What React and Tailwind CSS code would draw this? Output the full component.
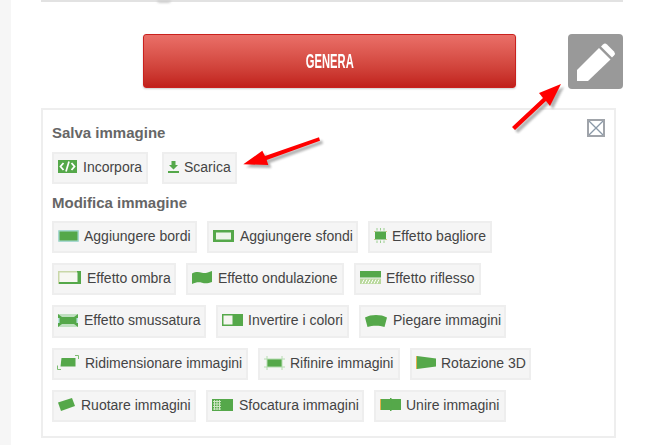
const G = "#55a84a";

const icons = {
  embed: (
    <svg width="19" height="13" viewBox="0 0 19 13">
      <rect width="19" height="13" fill={G} />
      <path d="M5.500 3 2.500 6.500l3 3.500M13.500 3l3 3.500-3 3.500" fill="none" stroke="#fff" strokeWidth="1.800" />
      <path d="M11 1.500 8 11.500" stroke="#fff" strokeWidth="1.700" />
    </svg>
  ),
  download: (
    <svg width="11" height="12" viewBox="0 0 11 12">
      <path d="M3.500 0h4v4H10L5.500 8.500 1 4h2.500z" fill={G} />
      <rect y="10" width="11" height="2" fill={G} />
    </svg>
  ),
  border: (
    <svg width="21" height="12" viewBox="0 0 21 12">
      <rect width="21" height="12" rx="1" fill="#a8d8d0" />
      <rect x="1.500" y="1.500" width="18" height="9" fill={G} />
    </svg>
  ),
  bg: (
    <svg width="21" height="12" viewBox="0 0 21 12">
      <rect width="21" height="12" fill={G} />
      <rect x="3" y="2.500" width="15" height="7" fill="#eef5ea" />
    </svg>
  ),
  glow: (
    <svg width="13" height="15" viewBox="0 0 13 15">
      <rect x="1" y="3.500" width="11" height="8" fill={G} />
      <path d="M3 0v2.500M6.500 0v2.500M10 0v2.500M3 12.500V15M6.500 12.500V15M10 12.500V15" stroke="#9bcf90" strokeWidth="1" />
      <path d="M0 3.500h1M12 3.500h1M0 11.500h1M12 11.500h1" stroke="#e3c77a" strokeWidth="1" />
    </svg>
  ),
  shadow: (
    <svg width="23" height="13" viewBox="0 0 23 13">
      <rect width="22" height="13" fill="#c9d7a8" />
      <rect x="19" width="4" height="13" fill={G} />
      <rect x="1" y="11" width="20" height="2" fill={G} />
      <rect x="1.500" y="1.500" width="18" height="9.500" fill="#f7f7f2" />
    </svg>
  ),
  wave: (
    <svg width="20" height="13" viewBox="0 0 20 13">
      <path d="M0 2.500C4 .5 7 1 10 1.800S16 1.500 20 0v11c-4 1.500-7 1.500-10 .7S4 11 0 13z" fill={G} />
    </svg>
  ),
  reflect: (
    <svg width="21" height="13" viewBox="0 0 21 13">
      <rect width="21" height="6.500" fill={G} />
      <rect y="7.500" width="21" height="5.500" fill="#b8d89c" />
      <path d="M2 12.500 4 8.500M5 12.500 7 8.500M8 12.500 10 8.500M11 12.500 13 8.500M14 12.500 16 8.500M17 12.500 19 8.500" stroke="#fff" strokeWidth="1" />
    </svg>
  ),
  bevel: (
    <svg width="20" height="13" viewBox="0 0 20 13">
      <rect width="20" height="13" fill={G} />
      <path d="M0 0 4 3h12l4-3zM0 13l4-3h12l4 3z" fill="#bfe0c0" />
      <rect y="4" width="1.500" height="5" fill="#bfe6e6" />
      <rect x="18.500" y="4" width="1.500" height="5" fill="#bfe6e6" />
    </svg>
  ),
  invert: (
    <svg width="21" height="12" viewBox="0 0 21 12">
      <rect width="21" height="12" fill={G} />
      <rect x="1.500" y="1.500" width="9" height="9" fill="#f5f5f0" />
    </svg>
  ),
  bend: (
    <svg width="22" height="13" viewBox="0 0 22 13">
      <path d="M0 3.500C6 .2 16 .2 22 3.500L19.500 13c-5-1.700-12-1.700-17 0z" fill={G} />
    </svg>
  ),
  resize: (
    <svg width="22" height="15" viewBox="0 0 22 15">
      <path d="M4.500 3H18.500V11.500H3.500z" fill={G} />
      <path d="M18 .5h3.500V4M.5 10.500v4H4" fill="none" stroke="#7cbd70" strokeWidth="1" />
    </svg>
  ),
  crop: (
    <svg width="21" height="14" viewBox="0 0 21 14">
      <rect x="3" y="3" width="15" height="8" fill={G} />
      <path d="M0 3h21M0 11h21M3 0v14M18 0v14" stroke="#b5dcb0" strokeWidth="1" />
    </svg>
  ),
  rotate3d: (
    <svg width="20" height="13" viewBox="0 0 20 13">
      <path d="M1 0l19 2.500v8L1 13z" fill={G} />
      <rect width="1" height="13" fill="#e3b04b" />
    </svg>
  ),
  rotate: (
    <svg width="17" height="13" viewBox="0 0 17 13">
      <path d="M0 4.500 14 0l3 8L3 13z" fill={G} />
    </svg>
  ),
  blur: (
    <svg width="21" height="12" viewBox="0 0 21 12">
      <rect width="21" height="12" fill={G} />
      <path d="M1 2.500h8M1 5h8M1 7.500h8M1 10h8M2.500 1v10M5 1v10M7.500 1v10" stroke="#cfe6c4" strokeWidth="1" />
    </svg>
  ),
  merge: (
    <svg width="21" height="13" viewBox="0 0 21 13">
      <rect x="1" y="1" width="20" height="11" fill={G} />
      <rect y="1" width="1" height="11" fill="#e3b04b" />
      <rect x="10" width="1.500" height="13" fill={G} />
    </svg>
  ),
};

const saveItems = [
  { label: "Incorpora", icon: "embed", w: "w-[96px]", wide: true },
  { label: "Scarica", icon: "download", w: "w-[75px]" },
];

const rows = [
  [
    { label: "Aggiungere bordi", icon: "border", w: "w-[145px]" },
    { label: "Aggiungere sfondi", icon: "bg", w: "w-[151px]", wide: true },
    { label: "Effetto bagliore", icon: "glow", w: "w-[124px]" },
  ],
  [
    { label: "Effetto ombra", icon: "shadow", w: "w-[124px]", wide: true },
    { label: "Effetto ondulazione", icon: "wave", w: "w-[158px]", wide: true },
    { label: "Effetto riflesso", icon: "reflect", w: "w-[127px]" },
  ],
  [
    { label: "Effetto smussatura", icon: "bevel", w: "w-[154px]", wide: true },
    { label: "Invertire i colori", icon: "invert", w: "w-[133px]" },
    { label: "Piegare immagini", icon: "bend", w: "w-[147px]", wide: true },
  ],
  [
    { label: "Ridimensionare immagini", icon: "resize", w: "w-[196px]", pull: true, wide: true },
    { label: "Rifinire immagini", icon: "crop", w: "w-[142px]" },
    { label: "Rotazione 3D", icon: "rotate3d", w: "w-[121px]" },
  ],
  [
    { label: "Ruotare immagini", icon: "rotate", w: "w-[144px]", wide: true },
    { label: "Sfocatura immagini", icon: "blur", w: "w-[158px]", wide: true },
    { label: "Unire immagini", icon: "merge", w: "w-[132px]" },
  ],
];

function Chip({ item }) {
  return (
    <a className={`flex items-center gap-[5px] border-2 border-[#eeeeee] bg-[#f5f5f5] pl-[4px] text-[14px] text-[#444444] ${item.w}`}>
      {/* icons sit a little above the text's centre in the original */}
      <span className={`-mt-[3px] flex shrink-0 ${item.pull ? "-ml-px" : ""} ${item.wide ? "mr-px" : ""}`}>{icons[item.icon]}</span>
      <span className="whitespace-nowrap pb-[2px]">{item.label}</span>
    </a>
  );
}

function Arrow({ className, width, height, d }) {
  // hand drawn red arrows sitting on top of the page
  return (
    <svg className={`absolute ${className}`} width={width} height={height} viewBox={`0 0 ${width} ${height}`}>
      <path d={d} fill="#777777" opacity="0.55" transform="translate(3 3)" className="blur-[1px]" />
      <path d={d} fill="#ff0000" />
    </svg>
  );
}

export default function App() {
  return (
    <div className="relative flex h-[445px] w-[663px] overflow-hidden bg-white font-['Liberation_Sans',Arial,sans-serif]">
      <div className="w-[11px] shrink-0 bg-[#f6f6f6]" />

      <div className="flex-1 pl-[30px]">
        <div className="relative h-[2px] w-[582px] border-x-2 border-b-2 border-[#e2e2e2]">
          <div className="absolute left-[114px] top-0 h-[3px] w-[14px] rounded-b-full bg-[#cfcfcf] blur-[1px]" />
        </div>

        <div className="mt-[32px] flex items-start">
          <button className="ml-[102px] flex h-[54px] w-[373px] items-center justify-center rounded-[3px] border border-[#c9211e] bg-gradient-to-b from-[#ea6f68] to-[#c1201b] text-white shadow-[0_1px_2px_rgba(0,0,0,0.2)]">
            <span className="inline-block scale-x-[0.56] text-[20px] font-bold">GENERA</span>
          </button>
          <div className="ml-[52px] h-[55px] w-[55px] rounded-[4px] bg-[#999999]">
            <svg width="55" height="55" viewBox="0 0 55 55">
              <path d="M9 47V36L31 14 42.500 25.500 20 47z" fill="#fff" />
              <path d="M33 12.500 35 10.500a3 3 0 0 1 4 0l7 7a3 3 0 0 1 0 4L44 23.500z" fill="#fff" />
            </svg>
          </div>
        </div>

        <div className="relative mt-[19px] h-[330px] w-[575px] border-2 border-[#eeeeee] px-[9px] pt-[14px]">
          <div className="absolute right-[9px] top-[9px] flex h-[18px] w-[18px] items-center justify-center border-2 border-[#a0a4aa]">
            <svg width="14" height="14" viewBox="0 0 14 14">
              <path d="M0 0l14 14M14 0 0 14" stroke="#8a99a8" strokeWidth="1.300" />
            </svg>
          </div>

          <h3 className="text-[15px] font-bold leading-[18px] text-[#666666]">Salva immagine</h3>
          <div className="mt-[10px] flex h-[32px] gap-[14px]">
            {saveItems.map((item) => (
              <Chip key={item.label} item={item} />
            ))}
          </div>

          <h3 className="mt-[10px] text-[15px] font-bold leading-[18px] text-[#666666]">Modifica immagine</h3>
          <div className="mt-[9px] flex flex-col gap-[10px]">
            {rows.map((row, i) => (
              <div key={i} className={`flex gap-[10px] ${i === 2 ? "h-[33px]" : "h-[32px]"}`}>
                {row.map((item) => (
                  <Chip key={item.label} item={item} />
                ))}
              </div>
            ))}
          </div>
        </div>
      </div>

      <Arrow
        className="left-[510px] top-[84px]"
        width={56}
        height={50}
        d="M2 43 33 14 29 9 51 0 40 22 36 17 5 46z"
      />
      <Arrow
        className="left-[240px] top-[130px]"
        width={90}
        height={45}
        d="M3.300 34.300 22.300 20.700 25 26 79 7.300 80 10.700 26.700 30 28.300 35z"
      />
    </div>
  );
}
